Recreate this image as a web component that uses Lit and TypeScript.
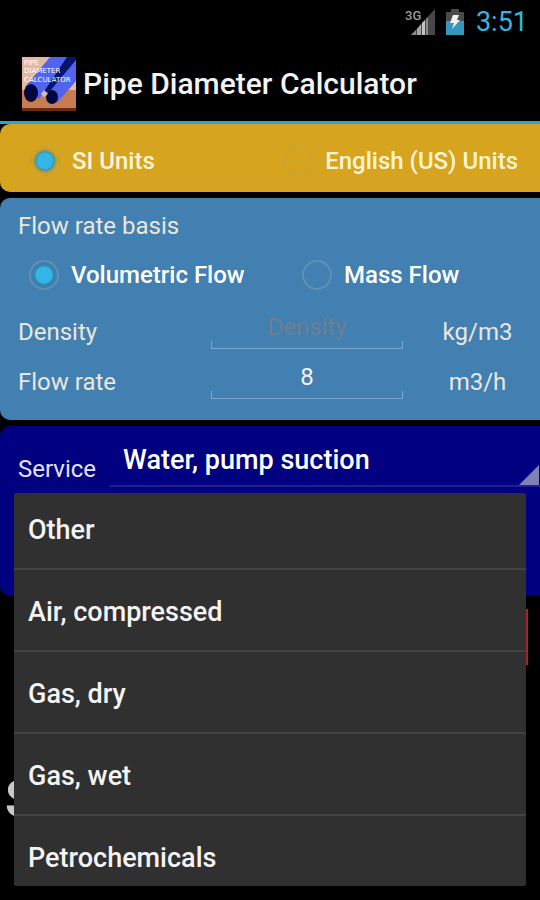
import { LitElement, html, css, svg } from "lit";
import { customElement, state } from "lit/decorators.js";

const SERVICES = ["Other", "Air, compressed", "Gas, dry", "Gas, wet", "Petrochemicals"];

const appIcon = svg`
  <svg class="logo" viewBox="0 0 54 54" aria-hidden="true">
    <rect width="54" height="54" fill="#e3b9a2"/>
    <rect y="33" width="54" height="18" fill="#c87c50"/>
    <rect y="51" width="54" height="3" fill="#6b2a12"/>
    <path d="M28 0H47L17 42L3 30Z" fill="#5263f0"/>
    <path d="M47 0H54V24L35 46L24 34Z" fill="#5263f0"/>
    <path d="M45 0H54V3L28 34L21 36Z" fill="#04156b"/>
    <ellipse cx="9" cy="36" rx="7" ry="9" fill="#02053f"/>
    <ellipse cx="30" cy="40" rx="6" ry="7" fill="#02053f"/>
    <path d="M19 37L22 33L26 37L22 40Z" fill="#c9c3c8"/>
    <g fill="#fff" font-family="DejaVu Sans, sans-serif" font-size="7">
      <text x="2" y="8">PIPE</text>
      <text x="2" y="16">DIAMETER</text>
      <text x="2" y="25">CALCULATOR</text>
    </g>
  </svg>`;

const signalIcon = svg`
  <svg class="signal" viewBox="0 0 32 28" role="img" aria-label="3G signal">
    <path d="M7 27L31 1V27Z" fill="#474747"/>
    <path d="M7 27L12 22V27Z" fill="#8a8a8a"/>
    <path d="M13 27V21L17 16V27Z" fill="#a6a6a6"/>
    <path d="M18 27V15L21 12V27Z" fill="#c4c4c4"/>
    <path d="M22 27V11L24 9V27Z" fill="#8a8a8a"/>
    <text x="1" y="12" fill="#9a9a9a" font-family="Roboto, sans-serif" font-size="13" font-weight="500">3G</text>
  </svg>`;

const batteryIcon = svg`
  <svg class="battery" viewBox="0 0 18 26" role="img" aria-label="Battery charging">
    <path d="M5 0H13V3H18V12H0V3H5Z" fill="#4a4a4a"/>
    <rect y="12" width="18" height="14" fill="#3796bb"/>
    <path d="M7 6H13L11 11H14L6 20L8 14H4Z" fill="#f2f2f2"/>
  </svg>`;

@customElement("app-root")
export class AppRoot extends LitElement {
  @state() private units = "si";
  @state() private basis = "volumetric";
  @state() private service = "Water, pump suction";
  @state() private open = true;

  static styles = css`
    :host {
      display: flex;
      flex-direction: column;
      min-height: 100vh;
      overflow: hidden;
      background: #000;
      color: #ebe6de;
      font: 24px/28px Roboto, sans-serif;
    }
    * { box-sizing: border-box; }
    .status {
      display: flex;
      justify-content: flex-end;
      align-items: center;
      height: 44px;
      padding-right: 12px;
      color: #33b5e5;
      font-size: 27px;
    }
    .signal { width: 32px; height: 28px; margin-right: 10px; }
    .battery { width: 18px; height: 26px; margin-right: 12px; }
    .title {
      display: flex;
      align-items: center;
      gap: 7px;
      height: 80px;
      padding: 2px 22px 0;
      border-bottom: 3px solid #27a9ce;
    }
    .logo { width: 54px; height: 54px; }
    h1 { margin: 0; color: #f3f3f3; font-size: 30px; font-weight: 500; line-height: 36px; }
    main { display: flex; flex-direction: column; gap: 6px; }
    .panel { border-radius: 10px 0 0 10px; }
    fieldset { margin: 0; border: 0; padding: 0; min-width: 0; }
    .units {
      display: flex;
      justify-content: space-between;
      height: 68px;
      padding: 22px 22px 0 30px;
      background: #d7a41f;
    }
    .flow { height: 222px; padding: 14px 18px 0; background: #4180b1; }
    .choices { display: grid; grid-template-columns: 273px 1fr; padding: 20px 0 0 11px; }
    .choice {
      display: flex;
      align-items: center;
      gap: 12px;
      height: 30px;
      color: #fff;
      font-weight: 500;
    }
    .units .choice { color: #fff5d6; }
    input[type="radio"] {
      appearance: none;
      width: 30px;
      height: 30px;
      margin: 0;
      border: 2px solid rgba(190, 190, 200, 0.25);
      border-radius: 50%;
    }
    .units input[type="radio"] { border-color: rgba(190, 160, 90, 0.35); }
    input[type="radio"]:checked {
      background: radial-gradient(circle, #33b5e5 0 8px, #2d93bd 9px, rgba(45, 130, 160, 0.4) 10px, transparent 13px);
    }
    .row {
      display: grid;
      grid-template-columns: 193px 192px 1fr;
      align-items: center;
      height: 50px;
    }
    .row label, .unit { padding-top: 4px; }
    .rows { padding-top: 15px; }
    .unit { margin-right: -6px; padding-left: 24px; text-align: center; }
    .field { display: flex; height: 38px; align-items: flex-end; position: relative; }
    .field::after {
      content: "";
      position: absolute;
      inset: auto 0 0;
      height: 7px;
      border: 1px solid #7aa9d0;
      border-top: 0;
      pointer-events: none;
    }
    .field input {
      width: 100%;
      height: 38px;
      border: 0;
      padding: 0 0 6px;
      outline: 0;
      background: none;
      color: #f4f1ea;
      font: inherit;
      text-align: center;
    }
    .field input::placeholder { color: #6f7f90; opacity: 1; }
    .service {
      position: relative;
      display: flex;
      align-items: flex-start;
      gap: 14px;
      height: 170px;
      padding-left: 18px;
      background: #000080;
    }
    .service label { padding-top: 29px; color: #e2e2f2; }
    .spinner { position: relative; flex: 1; height: 61px; border-bottom: 2px solid #20208e; }
    .spinner::after {
      content: "";
      position: absolute;
      right: 1px;
      bottom: 0;
      width: 20px;
      height: 20px;
      background: #8080b4;
      clip-path: polygon(100% 0, 100% 100%, 0 100%);
      pointer-events: none;
    }
    select {
      appearance: none;
      width: 100%;
      height: 58px;
      border: 0;
      padding: 10px 24px 0 13px;
      outline: 0;
      background: none;
      color: #fff;
      font: 500 27px/32px Roboto, sans-serif;
    }
    .menu {
      position: absolute;
      z-index: 1;
      top: 67px;
      left: 14px;
      right: 14px;
      max-height: 393px;
      margin: 0;
      padding: 0;
      overflow: hidden;
      list-style: none;
      border-radius: 2px;
      background: #303030;
    }
    .menu li { border-bottom: 2px solid #424242; }
    .menu li:first-child { margin-top: -5px; }
    .menu button {
      display: block;
      width: 100%;
      height: 80px;
      border: 0;
      padding: 3px 14px 0;
      background: none;
      color: #f4f4f4;
      font: 500 27px/32px Roboto, sans-serif;
      text-align: left;
    }
    .result { height: 56px; margin: 7px 12px 0 14px; border: 2px solid #b01c30; }
    .heading { margin: 97px 5px 0; color: #c8c8c8; font-size: 52px; font-weight: 700; line-height: 64px; }
  `;

  private radio(group: "units" | "basis", value: string, label: string) {
    return html`<label class="choice">
      <input type="radio" name=${group} .checked=${this[group] === value}
        @change=${() => { this[group] = value; }} />${label}
    </label>`;
  }

  private pick(name: string) {
    this.service = name;
    this.open = false;
  }

  render() {
    return html`
      <div class="status">${signalIcon}${batteryIcon}<span>3:51</span></div>
      <header class="title">${appIcon}<h1>Pipe Diameter Calculator</h1></header>
      <main>
        <fieldset class="panel units" aria-label="Units">
          ${this.radio("units", "si", "SI Units")}
          ${this.radio("units", "us", "English (US) Units")}
        </fieldset>
        <section class="panel flow">
          <div id="basis">Flow rate basis</div>
          <fieldset class="choices" aria-labelledby="basis">
            ${this.radio("basis", "volumetric", "Volumetric Flow")}
            ${this.radio("basis", "mass", "Mass Flow")}
          </fieldset>
          <div class="rows">
            <div class="row">
              <label for="density">Density</label>
              <div class="field"><input id="density" type="text" placeholder="Density" /></div>
              <span class="unit">kg/m3</span>
            </div>
            <div class="row">
              <label for="rate">Flow rate</label>
              <div class="field"><input id="rate" type="text" value="8" /></div>
              <span class="unit">m3/h</span>
            </div>
          </div>
        </section>
        <section class="panel service">
          <label for="service">Service</label>
          <div class="spinner">
            <select id="service" @mousedown=${(e: Event) => { e.preventDefault(); this.open = !this.open; }}>
              <option>${this.service}</option>
            </select>
          </div>
          ${this.open ? html`<ul class="menu" aria-label="Service">
            ${SERVICES.map((s) => html`<li><button type="button" @click=${() => this.pick(s)}>${s}</button></li>`)}
          </ul>` : null}
        </section>
        <div class="result"></div>
        <div class="heading">S</div>
      </main>
    `;
  }
}
